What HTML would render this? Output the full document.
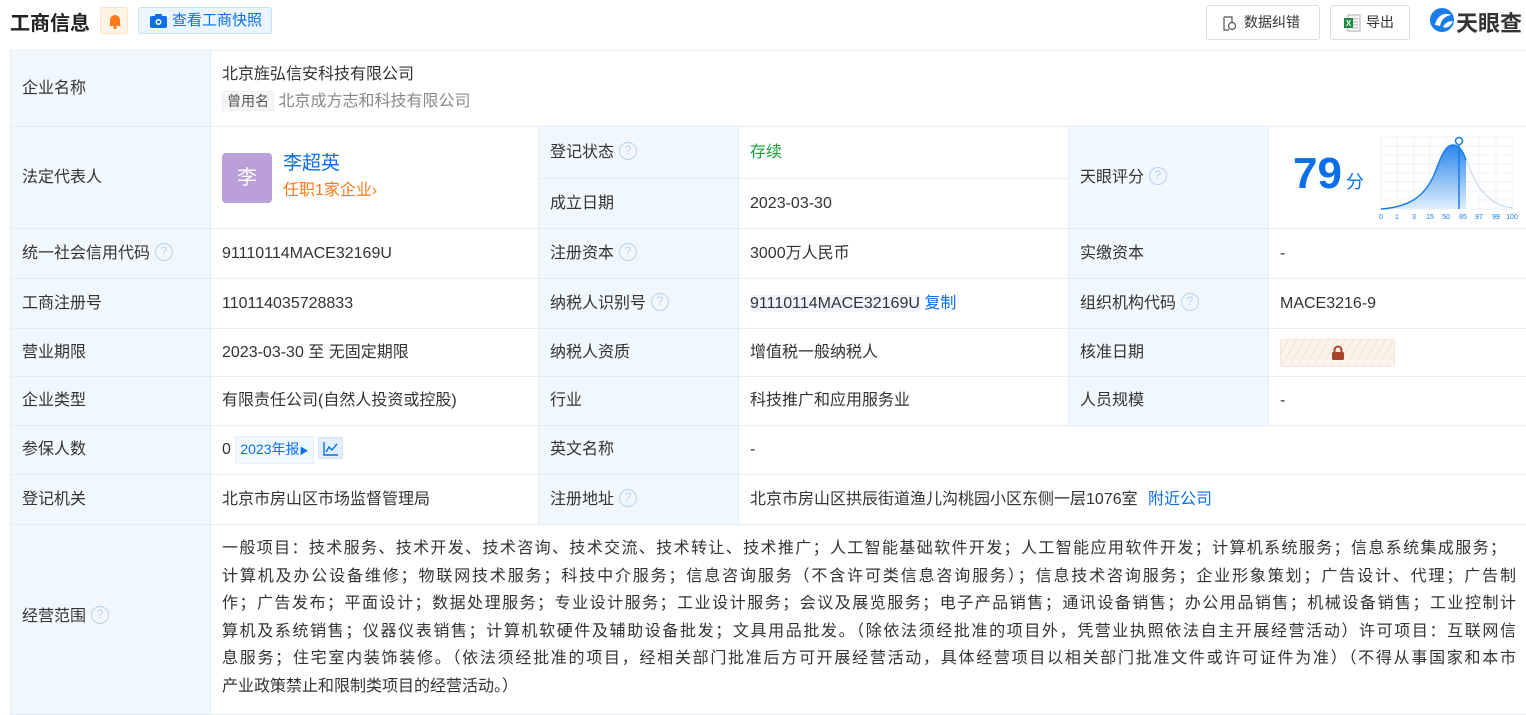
<!DOCTYPE html>
<html><head><meta charset="utf-8"><style>
*{box-sizing:border-box;margin:0;padding:0}
body{width:1526px;height:709px;overflow:hidden;background:#fff;font-family:"Liberation Sans","Noto Sans CJK SC",sans-serif;color:#333;font-size:16px;position:relative}
.top{position:absolute;left:0;top:0;width:1526px;height:50px}
.title{position:absolute;left:10px;top:7px;font-size:20px;font-weight:bold;color:#222}
.bell{position:absolute;left:100px;top:7px;width:28px;height:27px;background:#fff3e6;border:1px solid #fde2c6;border-radius:3px}
.snap{position:absolute;left:138px;top:7px;width:134px;height:27px;background:#ebf5ff;border:1px solid #c4e0fb;border-radius:3px;color:#0a6fe8;font-size:15px;line-height:25px;padding-left:33px}
.btn{position:absolute;top:5px;height:35px;border:1px solid #ddd;border-radius:3px;font-size:14px;line-height:33px;color:#333}
table{position:absolute;left:10px;top:50px;border-collapse:collapse;table-layout:fixed;width:1520px}
td{border:1px solid #e4edf6;padding:0 11px;vertical-align:middle;line-height:22px}
td.l{background:#f0f7fd}
.q{display:inline-block;width:18px;height:18px;border:1.5px solid #b9d3ec;border-radius:50%;color:#b9d3ec;font-size:12px;text-align:center;line-height:15px;vertical-align:middle;margin-left:5px;margin-top:-3px}
.blue{color:#0a6fe8}
.sl{display:block;width:1294px;white-space:nowrap;text-align:justify;text-align-last:justify}
</style></head><body>
<div class="top">
<div class="title">工商信息</div>
<div class="bell"><svg width="28" height="27" viewBox="0 0 28 27"><path d="M9 17 L9 12 A5 5 0 0 1 19 12 L19 17 L20 18 L8 18 Z" fill="#ff7a1a"/><circle cx="14" cy="19.5" r="1.6" fill="#ff7a1a"/></svg></div>
<div class="snap"><svg style="position:absolute;left:11px;top:6px" width="17" height="14" viewBox="0 0 17 14"><rect x="0" y="2" width="17" height="12" rx="2" fill="#0a6fe8"/><rect x="5" y="0" width="7" height="3" rx="1" fill="#0a6fe8"/><circle cx="8.5" cy="8" r="3" fill="#fff"/><circle cx="8.5" cy="8" r="1.5" fill="#0a6fe8"/></svg>查看工商快照</div>
<div class="btn" style="left:1206px;width:114px;padding-left:37px"><svg style="position:absolute;left:16px;top:10px" width="13" height="15" viewBox="0 0 13 15"><path d="M1 1 H9 V6 M1 1 V14 H6" fill="none" stroke="#555" stroke-width="1.2"/><circle cx="9" cy="10" r="3.5" fill="none" stroke="#555" stroke-width="1.2"/></svg>数据纠错</div>
<div class="btn" style="left:1330px;width:80px;padding-left:35px"><svg style="position:absolute;left:12px;top:8px" width="18" height="18" viewBox="0 0 18 18"><rect x="5" y="1" width="12" height="16" fill="#fff" stroke="#aaa"/><path d="M9 5h6M9 8h6M9 11h6M9 14h6" stroke="#aaa"/><rect x="1" y="4" width="9" height="10" fill="#1d8a43"/><text x="5.5" y="12" font-size="8" fill="#fff" text-anchor="middle" font-family="Liberation Sans" font-weight="bold">X</text></svg>导出</div>
<svg style="position:absolute;left:1429px;top:7px" width="26" height="26" viewBox="0 0 26 26"><circle cx="13" cy="13" r="12" fill="#1a7ce8"/><path d="M6 18 C8 8 16 5 22 8 C16 9 12 13 11 19 Z" fill="#fff"/><path d="M14 20 C16 16 19 14 24 14 C22 19 18 22 14 20Z" fill="#fff"/></svg>
<div style="position:absolute;left:1456px;top:6px;font-size:22px;font-weight:bold;color:#333;white-space:nowrap">天眼查</div>
</div>
<table>
<colgroup><col style="width:200px"><col style="width:328px"><col style="width:200px"><col style="width:330px"><col style="width:200px"><col style="width:262px"></colgroup>
<tr style="height:76px"><td class="l">企业名称</td><td colspan="5"><div style="line-height:24px">北京旌弘信安科技有限公司</div><div style="line-height:24px;margin-top:2px"><span style="background:#f4f6f8;border:1px solid #eceef1;font-size:14px;padding:1px 4px;color:#555">曾用名</span> <span style="color:#888">北京成方志和科技有限公司</span></div></td></tr>
<tr style="height:52px"><td class="l" rowspan="2">法定代表人</td><td rowspan="2"><div style="position:relative;height:52px"><div style="position:absolute;left:0;top:1px;width:50px;height:50px;background:#bb9fd9;border-radius:4px;color:#fff;font-size:20px;text-align:center;line-height:50px">李</div><div style="position:absolute;left:61px;top:0;font-size:19px;color:#0a6fe8;line-height:24px">李超英</div><div style="position:absolute;left:61px;top:27px;color:#ff7a1a;line-height:24px">任职1家企业›</div></div></td><td class="l">登记状态<span class="q">?</span></td><td style="color:#1aa038">存续</td><td class="l" rowspan="2">天眼评分<span class="q">?</span></td><td rowspan="2" style="position:relative;padding:0"><div style="position:absolute;left:24px;top:22px;font-size:44px;font-weight:bold;color:#0a6fe8;line-height:50px">79<span style="font-size:18px;font-weight:normal;margin-left:4px">分</span></div>
<svg style="position:absolute;left:110px;top:8px" width="140" height="86" viewBox="0 0 140 86"><g stroke="#eef2f7" stroke-width="1"><path d="M2 2H134M2 11H134M2 20H134M2 29H134M2 38H134M2 47H134M2 56H134M2 65H134M2 74H134"/><path d="M2 2V74M18 2V74M35 2V74M51 2V74M67 2V74M84 2V74M100 2V74M117 2V74M134 2V74"/></g><defs><linearGradient id="g" x1="0" y1="0" x2="0" y2="1"><stop offset="0" stop-color="#2a86ee"/><stop offset="1" stop-color="#e0eefc"/></linearGradient></defs><path d="M2 74 C30 72 45 62 55 40 C62 22 66 10 74 10 C80 10 84 16 87 25 L87 74Z" fill="url(#g)"/><path d="M2 74 C30 72 45 62 55 40 C62 22 66 10 74 10 C80 10 84 16 87 25" fill="none" stroke="#1a7ce8" stroke-width="1.5"/><path d="M87 25 C95 45 105 70 134 73" fill="none" stroke="#c9d9e8" stroke-width="1.2"/><line x1="80" y1="8" x2="80" y2="74" stroke="#1a7ce8" stroke-width="1.5"/><circle cx="80" cy="6" r="3.5" fill="#fff" stroke="#1a7ce8" stroke-width="1.5"/><g font-size="7" fill="#1a7ce8" font-family="Liberation Sans" text-anchor="middle"><text x="2" y="84">0</text><text x="18" y="84">1</text><text x="35" y="84">3</text><text x="51" y="84">15</text><text x="67" y="84">50</text><text x="84" y="84">85</text><text x="100" y="84">97</text><text x="117" y="84">99</text><text x="133" y="84">100</text></g></svg></td></tr>
<tr style="height:50px"><td class="l">成立日期</td><td>2023-03-30</td></tr>
<tr style="height:50px"><td class="l">统一社会信用代码<span class="q">?</span></td><td>91110114MACE32169U</td><td class="l">注册资本<span class="q">?</span></td><td>3000万人民币</td><td class="l">实缴资本</td><td>-</td></tr>
<tr style="height:50px"><td class="l">工商注册号</td><td>110114035728833</td><td class="l">纳税人识别号<span class="q">?</span></td><td><span style="background:#eef5fd">91110114MACE32169U</span> <span class="blue">复制</span></td><td class="l">组织机构代码<span class="q">?</span></td><td>MACE3216-9</td></tr>
<tr style="height:48px"><td class="l">营业期限</td><td>2023-03-30 至 无固定期限</td><td class="l">纳税人资质</td><td>增值税一般纳税人</td><td class="l">核准日期</td><td><div style="width:115px;height:28px;border:1px solid #f6e5d6;border-radius:3px;background:repeating-linear-gradient(-60deg,#fcf3ea 0 6px,#f3e3d4 6px 7px);position:relative"><svg style="position:absolute;left:49px;top:5px" width="16" height="16" viewBox="0 0 16 16"><path d="M4.5 7V5a3.5 3.5 0 0 1 7 0v2" fill="none" stroke="#a8442a" stroke-width="2"/><rect x="2" y="7" width="12" height="8" rx="1.5" fill="#a8442a"/></svg></div></td></tr>
<tr style="height:49px"><td class="l">企业类型</td><td>有限责任公司(自然人投资或控股)</td><td class="l">行业</td><td>科技推广和应用服务业</td><td class="l">人员规模</td><td>-</td></tr>
<tr style="height:49px"><td class="l">参保人数</td><td>0 <span style="display:inline-block;background:#f2f8ff;border:1px solid #e6f0fb;color:#0a6fe8;font-size:14px;padding:2px 4px;line-height:20px">2023年报<span style="font-size:9px">▶</span></span> <span style="display:inline-block;width:25px;height:22px;background:#e3effc;border:1px solid #cfe3f8;vertical-align:-5px;position:relative"><svg style="position:absolute;left:4px;top:3px" width="16" height="15" viewBox="0 0 16 15"><path d="M1 1V14H15" fill="none" stroke="#0a6fe8" stroke-width="1.4"/><path d="M3 11L6 6L9 9L14 3" fill="none" stroke="#0a6fe8" stroke-width="1.4"/></svg></span></td><td class="l">英文名称</td><td colspan="3">-</td></tr>
<tr style="height:50px"><td class="l">登记机关</td><td>北京市房山区市场监督管理局</td><td class="l">注册地址<span class="q">?</span></td><td colspan="3">北京市房山区拱辰街道渔儿沟桃园小区东侧一层1076室 <span class="blue" style="margin-left:6px">附近公司</span></td></tr>
<tr style="height:190px"><td class="l" style="padding-bottom:6px">经营范围<span class="q">?</span></td><td colspan="5" style="line-height:27.6px;vertical-align:top;padding-top:10px;padding-right:6px"><span class="sl" style="width:1284px">一般项目：技术服务、技术开发、技术咨询、技术交流、技术转让、技术推广；人工智能基础软件开发；人工智能应用软件开发；计算机系统服务；信息系统集成服务；</span><span class="sl">计算机及办公设备维修；物联网技术服务；科技中介服务；信息咨询服务（不含许可类信息咨询服务）；信息技术咨询服务；企业形象策划；广告设计、代理；广告制</span><span class="sl">作；广告发布；平面设计；数据处理服务；专业设计服务；工业设计服务；会议及展览服务；电子产品销售；通讯设备销售；办公用品销售；机械设备销售；工业控制计</span><span class="sl">算机及系统销售；仪器仪表销售；计算机软硬件及辅助设备批发；文具用品批发。（除依法须经批准的项目外，凭营业执照依法自主开展经营活动）许可项目：互联网信</span><span class="sl">息服务；住宅室内装饰装修。（依法须经批准的项目，经相关部门批准后方可开展经营活动，具体经营项目以相关部门批准文件或许可证件为准）（不得从事国家和本市</span><span style="display:block;white-space:nowrap">产业政策禁止和限制类项目的经营活动。）</span></td></tr>
</table>
</body></html>
